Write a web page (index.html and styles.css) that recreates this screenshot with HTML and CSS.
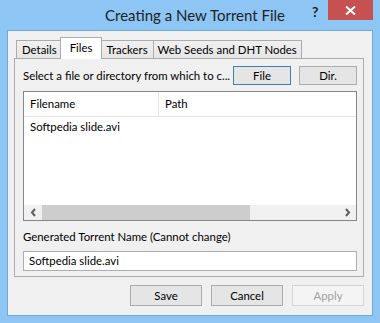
FILE: index.html
```html
<!DOCTYPE html>
<html lang="en">
<head>
    <meta charset="UTF-8">
    <title>Creating a New Torrent File</title>
    <link rel="stylesheet" href="styles.css">
</head>
<body>
    <div class="window">
        <div class="titlebar">
            <div class="title">Creating a New Torrent File</div>
            <div class="help">?</div>
            <div class="close">
                <svg width="11" height="9" viewBox="0 0 11 9"><path d="M1 0.5 L10 8.5 M10 0.5 L1 8.5" stroke="#fff" stroke-width="2"/></svg>
            </div>
        </div>
        <div class="client">
            <div class="tabs">
                <div class="tab">Details</div>
                <div class="tab active">Files</div>
                <div class="tab">Trackers</div>
                <div class="tab tab-last">Web Seeds and DHT Nodes</div>
            </div>
            <div class="panel">
                <div class="select-row">
                    <span class="select-text">Select a file or directory from which to c...</span>
                    <button class="btn focus">File</button>
                    <button class="btn">Dir.</button>
                </div>
                <div class="list">
                    <div class="list-head">
                        <div class="col col-name">Filename</div>
                        <div class="col col-path">Path</div>
                    </div>
                    <div class="list-body">
                        <div class="row">Softpedia slide.avi</div>
                    </div>
                    <div class="hscroll">
                        <div class="arrow">
                            <svg width="7" height="9" viewBox="0 0 7 9"><path d="M5 1 L2 4.5 L5 8" fill="none" stroke="#606060" stroke-width="2"/></svg>
                        </div>
                        <div class="track"><div class="thumb"></div></div>
                        <div class="arrow">
                            <svg width="7" height="9" viewBox="0 0 7 9"><path d="M2 1 L5 4.5 L2 8" fill="none" stroke="#606060" stroke-width="2"/></svg>
                        </div>
                    </div>
                </div>
                <div class="gen-label">Generated Torrent Name (Cannot change)</div>
                <div class="textbox">Softpedia slide.avi</div>
            </div>
            <div class="footer">
                <button class="btn wide">Save</button>
                <button class="btn wide">Cancel</button>
                <button class="btn wide disabled">Apply</button>
            </div>
        </div>
    </div>
</body>
</html>
```

FILE: styles.css
```css
body {
    margin: 0;
    background-color: #8dc6f5;
    font-family: Lato, "Noto Sans", sans-serif;
    font-size: 11.4px;
    color: #000;
}
.window {
    width: 380px;
    height: 323px;
    box-sizing: border-box;
    padding: 0 7px 7px 7px;
    display: flex;
    flex-direction: column;
}
.titlebar {
    height: 30px;
    position: relative;
}
.title {
    text-align: center;
    font-size: 15px;
    line-height: 30px;
    color: #222;
    padding-left: 10px;
}
.help {
    position: absolute;
    left: 305px;
    top: 3px;
    font-size: 14px;
    font-weight: bold;
    color: #222;
}
.close {
    position: absolute;
    left: 321px;
    top: 0;
    width: 45px;
    height: 20px;
    background-color: #c75050;
    display: flex;
    align-items: center;
    justify-content: center;
}
.client {
    flex: 1;
    background-color: #f0f0f0;
    border: 1px solid #6ea9dd;
    padding: 7px 8px 0 6px;
    display: flex;
    flex-direction: column;
}
.tabs {
    display: flex;
    align-items: flex-end;
    height: 20px;
    padding-left: 2px;
    position: relative;
    z-index: 1;
}
.tab {
    height: 17px;
    border: 1px solid #acacac;
    border-bottom: none;
    margin-right: -1px;
    padding: 0 5px;
    line-height: 18px;
    background: linear-gradient(#f0f0f0, #e5e5e5);
}
.tab-last {
    padding: 0 4px;
}
.tab.active {
    height: 21px;
    margin: 0 -2px 0 -2px;
    padding: 0 9px;
    background: #fff;
    line-height: 19px;
    position: relative;
    z-index: 2;
    top: 1px;
}
.panel {
    height: 219px;
    box-sizing: border-box;
    border: 1px solid #acacac;
    background-color: #f0f0f0;
    padding: 7px 6px 0 8px;
}
.select-row {
    display: flex;
    align-items: center;
    height: 18px;
}
.select-text {
    width: 210px;
    white-space: nowrap;
    overflow: hidden;
}
.btn {
    font-family: inherit;
    font-size: 11.4px;
    height: 19px;
    padding: 0;
    border: 1px solid #acacac;
    background: #e5e5e5;
    color: #000;
}
.select-row .btn {
    width: 58px;
    margin-left: 8px;
}
.select-row .btn.focus {
    border-color: #3c7fb1;
    margin-left: 0;
}
.list {
    margin-top: 7px;
    height: 130px;
    box-sizing: border-box;
    border: 1px solid #828790;
    background: #fff;
    display: flex;
    flex-direction: column;
}
.list-head {
    display: flex;
    height: 24px;
    border-bottom: 1px solid #e5e5e5;
}
.col {
    line-height: 24px;
    padding-left: 6px;
}
.col-name {
    width: 128px;
    border-right: 1px solid #e5e5e5;
}
.list-body {
    flex: 1;
}
.row {
    padding-left: 6px;
    line-height: 20px;
}
.hscroll {
    height: 15px;
    display: flex;
    background: #f0f0f0;
}
.arrow {
    width: 18px;
    display: flex;
    align-items: center;
    justify-content: center;
}
.track {
    flex: 1;
}
.thumb {
    width: 208px;
    height: 15px;
    background: #cdcdcd;
}
.gen-label {
    margin-top: 8px;
    height: 16px;
    line-height: 16px;
}
.textbox {
    margin-top: 6px;
    height: 20px;
    box-sizing: border-box;
    border: 1px solid #abadb3;
    background: #fff;
    line-height: 18px;
    padding-left: 5px;
}
.footer {
    display: flex;
    justify-content: flex-end;
    gap: 9px;
    padding-top: 8px;
}
.btn.wide {
    width: 72px;
    height: 21px;
}
.btn.disabled {
    color: #a0a0a0;
    border-color: #d5d5d5;
    background: #f4f4f4;
}
```
